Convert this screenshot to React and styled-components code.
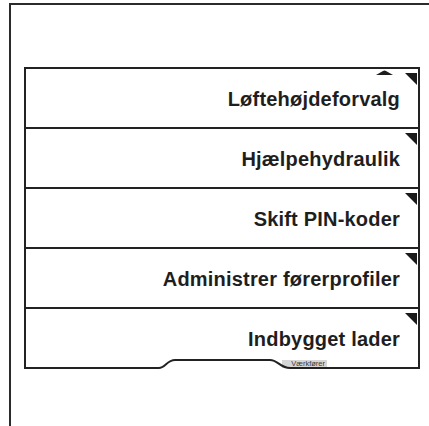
import React from "react";
import styled, { createGlobalStyle } from "styled-components";

const Global = createGlobalStyle`
  html, body { margin: 0; padding: 0; background: #ffffff; }
  body { font-family: "Liberation Sans", Arial, sans-serif; overflow: hidden; }
`;

const Frame = styled.div`
  box-sizing: border-box;
  margin: 3px 0 0 9px;
  height: 423px;
  width: 440px;
  border-top: 2px solid #2b2b2b;
  border-left: 2px solid #2b2b2b;
  padding: 62px 0 0 13px;
`;

const Panel = styled.div`
  box-sizing: border-box;
  width: 396px;
  border: 2px solid #222;
  border-bottom: none;
  display: flex;
  flex-direction: column;
`;

const Row = styled.div`
  position: relative;
  box-sizing: border-box;
  height: ${(p) => (p.$last ? 48 : 60)}px;
  padding: ${(p) => (p.$last ? "12px" : "2px")} 18px 0 0;
  border-bottom: ${(p) => (p.$last ? "none" : "2px solid #222")};
  display: flex;
  align-items: center;
  justify-content: flex-end;
`;

const Label = styled.span`
  font-size: 20px;
  font-weight: 700;
  letter-spacing: 0.2px;
  color: #1e1e1e;
  white-space: nowrap;
`;

const Corner = styled.svg`
  position: absolute;
  top: 4px;
  right: 1px;
  width: 12px;
  height: 12px;
`;

const Caret = styled.svg`
  position: absolute;
  top: 1px;
  right: 25px;
  width: 17px;
  height: 5px;
`;

const Footer = styled.div`
  position: relative;
  height: 12px;
`;

const EdgeSvg = styled.svg`
  position: absolute;
  left: 0;
  top: 0;
  width: 392px;
  height: 12px;
  z-index: 2;
`;

const Tab = styled.span`
  position: absolute;
  left: 256px;
  top: 3px;
  width: 45px;
  height: 8px;
  background: #d6d6d6;
  color: #3a3a3a;
  font-family: "Liberation Sans", Arial, sans-serif;
  font-size: 7.5px;
  line-height: 8px;
  text-align: right;
  padding-right: 2px;
  box-sizing: border-box;
  z-index: 1;
`;

const items = [
  "Løftehøjdeforvalg",
  "Hjælpehydraulik",
  "Skift PIN-koder",
  "Administrer førerprofiler",
  "Indbygget lader",
];

export default function App() {
  return (
    <>
      <Global />
      <Frame>
        <Panel>
          {items.map((t, i) => (
            <Row key={t} $last={i === items.length - 1}>
              {i === 0 && (
                <Caret viewBox="0 0 17 5">
                  <path d="M0 5 L7 1 Q8.5 0 10 1 L17 5 Z" fill="#1e1e1e" />
                </Caret>
              )}
              <Corner viewBox="0 0 12 12">
                <polygon points="0,0 12,0 12,12" fill="#1a1a1a" />
              </Corner>
              <Label>{t}</Label>
            </Row>
          ))}
          <Footer>
            <Tab>Værkfører</Tab>
            <EdgeSvg viewBox="0 0 392 12">
              <path
                d="M0 11 H133 C139 11 141 3 149 3 H244 C252 3 254 11 264 11 H392"
                fill="none"
                stroke="#222"
                strokeWidth="2"
              />
            </EdgeSvg>
          </Footer>
        </Panel>
      </Frame>
    </>
  );
}
